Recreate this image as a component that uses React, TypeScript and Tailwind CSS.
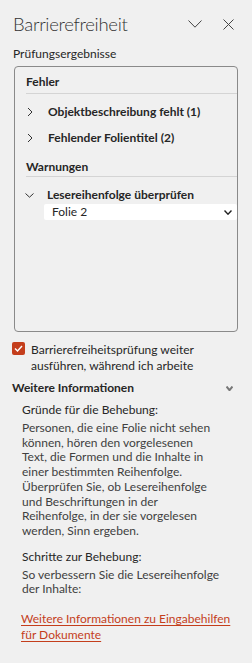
import React from 'react';

const ChevronRight = () => (
    <svg width="6" height="10" viewBox="0 0 6 10" className="shrink-0">
        <path d="M1 1 L5 5 L1 9" fill="none" stroke="#333" strokeWidth="1" />
    </svg>
);

const ChevronDown = ({ w = 10, h = 6, color = '#333', sw = 1 }: { w?: number; h?: number; color?: string; sw?: number }) => (
    <svg width={w} height={h} viewBox={`0 0 ${w} ${h}`} className="shrink-0">
        <path d={`M0.5 0.5 L${w / 2} ${h - 0.8} L${w - 0.5} 0.5`} fill="none" stroke={color} strokeWidth={sw} />
    </svg>
);

const issues = ['Objektbeschreibung fehlt (1)', 'Fehlender Folientitel (2)'];

export default function App() {
    return (
        <div className="w-[252px] h-[663px] bg-[#f0f0f0] overflow-hidden font-['Lato',sans-serif] text-[#262626]">
            {/* Kopfzeile */}
            <div className="h-[46px] flex items-center justify-between pl-[13px] pr-[18px] pt-[2px]">
                <div className="text-[18.5px] font-light tracking-[-0.3px] leading-none text-[#333]">Barrierefreiheit</div>
                <div className="flex items-center gap-[21px]">
                    <ChevronDown w={14} h={8} color="#444" />
                    <svg width="11" height="11" viewBox="0 0 11 11">
                        <path d="M0.5 0.5 L10.5 10.5 M10.5 0.5 L0.5 10.5" stroke="#444" strokeWidth="1" />
                    </svg>
                </div>
            </div>

            <div className="pl-[13px] text-[12px] leading-[16px]">Prüfungsergebnisse</div>

            {/* Ergebnisliste */}
            <div className="mt-[4px] mx-[14px] h-[266px] border border-[#8a8a8a] rounded-[4px] pl-[11px] text-[12px]">
                <div className="pt-[7px] leading-[16px] font-bold">Fehler</div>
                <div className="mt-[3px] h-px bg-[#d4d4d4]"></div>

                <div className="mt-[5px]">
                    {issues.map(t => (
                        <div key={t} className="h-[26px] flex items-center">
                            <div className="w-[22px] pl-[1px]"><ChevronRight /></div>
                            <div className="font-bold leading-[16px]">{t}</div>
                        </div>
                    ))}
                </div>

                <div className="mt-[8px] leading-[16px] font-bold">Warnungen</div>
                <div className="mt-[1px] h-px bg-[#d4d4d4]"></div>

                <div className="mt-[10px] h-[16px] flex items-center">
                    <div className="w-[22px] -ml-[1px]"><ChevronDown w={9} h={5} /></div>
                    <div className="font-bold leading-[16px]">Lesereihenfolge überprüfen</div>
                </div>
                <div className="mt-[1px] ml-[18px] h-[16px] bg-white rounded-[2px] flex items-center justify-between pl-[8px] pr-[5px]">
                    <span className="leading-[16px]">Folie 2</span>
                    <ChevronDown w={8} h={5} color="#222" sw={1.4} />
                </div>
            </div>

            {/* Option */}
            <div className="mt-[10px] pl-[12px] flex gap-[6px] text-[12px] leading-[16px]">
                <div className="w-[13px] h-[13px] rounded-[2px] bg-[#c43e1c] flex items-center justify-center shrink-0">
                    <svg width="9" height="7" viewBox="0 0 9 7">
                        <path d="M1 3.5 L3.5 6 L8 1" fill="none" stroke="#fff" strokeWidth="1.4" />
                    </svg>
                </div>
                <div>Barrierefreiheitsprüfung weiter<br />ausführen, während ich arbeite</div>
            </div>

            {/* Weitere Informationen */}
            <div className="mt-[6px] pl-[12px] pr-[19px] flex items-center justify-between">
                <div className="text-[12px] leading-[16px] font-bold">Weitere Informationen</div>
                <ChevronDown w={7} h={5} color="#777" sw={2} />
            </div>

            <div className="mt-[6px] pl-[22px] pr-[32px] h-[191px] overflow-hidden text-[12px]">
                <div className="leading-[16px]">Gründe für die Behebung:</div>
                <p className="mt-[3px] leading-[14.7px] text-[#404040]">
                    Personen, die eine Folie nicht sehen können, hören den vorgelesenen Text, die Formen und die Inhalte in einer bestimmten Reihenfolge. Überprüfen Sie, ob Lesereihenfolge und Beschriftungen in der Reihenfolge, in der sie vorgelesen werden, Sinn ergeben.
                </p>
                <div className="mt-[10px] leading-[16px]">Schritte zur Behebung:</div>
                <p className="mt-[3px] leading-[14.7px] text-[#404040]">
                    So verbessern Sie die Lesereihenfolge der Inhalte:
                </p>
            </div>

            <div className="mt-[18px] pl-[21px] pr-[10px] text-[12px] leading-[15.5px]">
                <a className="text-[#c43e1c] underline underline-offset-2 cursor-pointer">
                    Weitere Informationen zu Eingabehilfen für Dokumente
                </a>
            </div>
        </div>
    );
}
